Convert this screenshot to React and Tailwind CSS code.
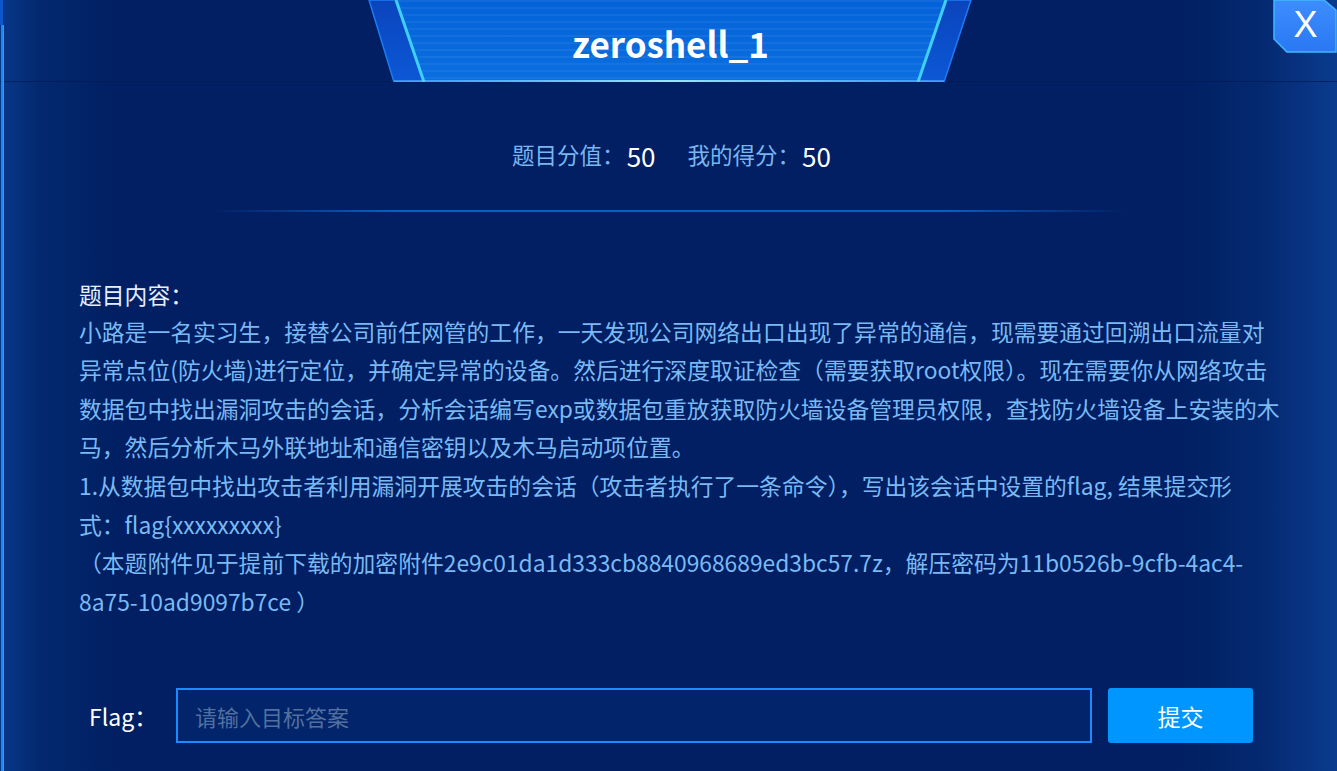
import React from "react";

const FONT = { fontFamily: '"Noto Sans CJK SC", "Noto Sans", sans-serif' };

function Banner() {
  return (
    <div className="relative w-[610px] h-[82px] flex items-center justify-center">
      <svg className="absolute inset-0" width="610" height="82" viewBox="0 0 610 82">
        <defs>
          <linearGradient id="side" x1="0" y1="0" x2="0" y2="1">
            <stop offset="0" stopColor="#0a44bc" />
            <stop offset="1" stopColor="#0c58d6" />
          </linearGradient>
          <linearGradient id="mid" x1="0" y1="0" x2="0" y2="1">
            <stop offset="0" stopColor="#0462d8" />
            <stop offset="1" stopColor="#0a6fe0" />
          </linearGradient>
          <linearGradient id="bottomGlow" x1="0" y1="0" x2="1" y2="0">
            <stop offset="0" stopColor="#5fc8ff" stopOpacity="0.5" />
            <stop offset="0.5" stopColor="#9fe4ff" stopOpacity="1" />
            <stop offset="1" stopColor="#5fc8ff" stopOpacity="0.5" />
          </linearGradient>
          <pattern id="stripes" width="10" height="7" patternUnits="userSpaceOnUse">
            <rect x="0" y="0" width="10" height="2" fill="#ffffff" opacity="0.05" />
          </pattern>
        </defs>
        <polygon points="3,0 605,0 578,82 28,82" fill="url(#side)" />
        <polygon points="3,0 605,0 578,82 28,82" fill="none" stroke="#1d7cf5" strokeWidth="1.5" />
        <polygon points="30,0 580,0 552,82 58,82" fill="url(#mid)" />
        <polygon points="30,0 580,0 552,82 58,82" fill="url(#stripes)" />
        <line x1="30" y1="0" x2="58" y2="82" stroke="#3fd0f5" strokeWidth="3" />
        <line x1="580" y1="0" x2="552" y2="82" stroke="#3fd0f5" strokeWidth="3" />
        <rect x="28" y="80" width="550" height="2" fill="url(#bottomGlow)" />
      </svg>
      <span className="relative text-white font-bold text-[35px] leading-none mt-[2px]" style={FONT}>
        zeroshell_1
      </span>
    </div>
  );
}

function CloseButton() {
  return (
    <div className="absolute top-0 right-0 w-[64px] h-[53px] flex items-center justify-center">
      <svg className="absolute inset-0" width="64" height="53" viewBox="0 0 64 53">
        <defs>
          <linearGradient id="xbg" x1="0" y1="0" x2="0" y2="1">
            <stop offset="0" stopColor="#3d8dff" />
            <stop offset="1" stopColor="#2a78f2" />
          </linearGradient>
        </defs>
        <polygon points="1,0 51,0 63,10 63,52 14,52 1,39" fill="url(#xbg)" stroke="#3eb8ff" strokeWidth="1.5" />
      </svg>
      <span className="relative text-white text-[36px] leading-none mb-[4px] ml-[1px]" style={{ fontFamily: '"Liberation Sans", sans-serif' }}>
        X
      </span>
    </div>
  );
}

const lines = [
  "小路是一名实习生，接替公司前任网管的工作，一天发现公司网络出口出现了异常的通信，现需要通过回溯出口流量对",
  "异常点位(防火墙)进行定位，并确定异常的设备。然后进行深度取证检查（需要获取root权限）。现在需要你从网络攻击",
  "数据包中找出漏洞攻击的会话，分析会话编写exp或数据包重放获取防火墙设备管理员权限，查找防火墙设备上安装的木",
  "马，然后分析木马外联地址和通信密钥以及木马启动项位置。",
  "1.从数据包中找出攻击者利用漏洞开展攻击的会话（攻击者执行了一条命令），写出该会话中设置的flag, 结果提交形",
  "式：flag{xxxxxxxxx}",
  "（本题附件见于提前下载的加密附件2e9c01da1d333cb8840968689ed3bc57.7z，解压密码为11b0526b-9cfb-4ac4-",
  "8a75-10ad9097b7ce ）",
];

export default function App() {
  return (
    <div
      className="relative w-[1337px] h-[771px] overflow-hidden bg-[linear-gradient(to_right,#08388a_0%,#03286f_3%,#011f62_9%,#011f62_88%,#04286f_94%,#0b3b8e_100%)]"
      style={FONT}
    >
      {/* left edge line */}
      <div className="absolute left-[1px] top-[25px] bottom-0 w-[3px] bg-[#1a88ec] border-r border-[#5cb8ff]/40" />
      <div className="absolute left-0 top-0 w-[3px] h-[25px] bg-[#0d55c8]" />

      {/* header */}
      <div className="flex justify-center h-[82px] border-b border-[#011a52]/70">
        <div className="ml-[4px]">
          <Banner />
        </div>
      </div>
      <CloseButton />

      {/* scores */}
      <div className="flex justify-center items-center h-[60px] mt-[43px] ml-[6px]">
        <span className="text-[#79b6f0] text-[22.5px]">题目分值：</span>
        <span className="text-white text-[26px] ml-[2px]">50</span>
        <span className="text-[#79b6f0] text-[22.5px] ml-[32px]">我的得分：</span>
        <span className="text-white text-[26px] ml-[2px]">50</span>
      </div>

      {/* separator */}
      <div className="flex justify-center mt-[25px]">
        <div className="w-[920px] h-[2px] bg-[linear-gradient(to_right,transparent,#0b5ec4_20%,#0b5ec4_80%,transparent)]" />
      </div>

      {/* content */}
      <div className="px-[79px] mt-[64px] text-[22.8px] leading-[38.6px] whitespace-nowrap">
        <div className="text-[#e6eeff] mb-[-2px]">题目内容：</div>
        {lines.map((l, i) => (
          <div key={i} className="text-[#7ab9f3]">
            {l}
          </div>
        ))}
      </div>

      {/* flag row */}
      <div className="flex items-center mt-[67px] pl-[89px] h-[55px]">
        <span className="text-white text-[23px] w-[87px]">Flag：</span>
        <input
          className="w-[916px] h-[55px] border-2 border-[#1a8cff] bg-[#02246a] px-[17px] text-[22px] text-white placeholder:text-[#52709f] outline-none"
          placeholder="请输入目标答案"
          style={FONT}
        />
        <button className="ml-[16px] w-[145px] h-[55px] rounded-[3px] bg-[#0096ff] text-white text-[23px]" style={FONT}>
          提交
        </button>
      </div>
    </div>
  );
}
